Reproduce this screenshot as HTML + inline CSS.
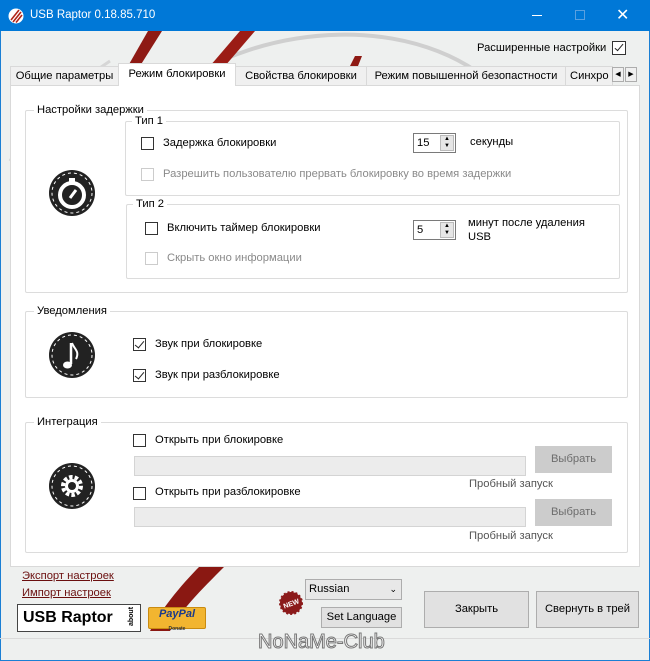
<!DOCTYPE html>
<html><head><meta charset="utf-8"><style>
*{box-sizing:border-box;margin:0;padding:0}
body{width:650px;height:661px;overflow:hidden;font-family:"Liberation Sans","DejaVu Sans",sans-serif;font-size:11.2px;color:#000;position:relative;background:#eef0ef}
.a{position:absolute;white-space:nowrap}
.win{position:absolute;left:0;top:0;width:650px;height:661px;border:1px solid #1a7fd4;border-top:none}
.title{position:absolute;left:0;top:0;width:650px;height:31px;background:#0078d7;color:#fff;font-size:12px}
.cb{position:absolute;width:13px;height:13px;border:1px solid #333;background:#fff}
.cb.d{border-color:#ccc}
.cb.c::after{content:"";position:absolute;left:3px;top:0px;width:4px;height:8px;border:solid #222;border-width:0 1.5px 1.5px 0;transform:rotate(40deg)}
.grp{position:absolute;border:1px solid #dcdcdc;border-radius:2px}
.lg{position:absolute;background:#fff;padding:0 3px;top:-8px;left:8px;line-height:14px}
.dis{color:#8a8a8a}
.tab{position:absolute;top:66px;height:20px;border:1px solid #d9d9d9;background:#f0f0f0;line-height:18px;text-align:center}
.btn{position:absolute;background:#e1e1e1;border:1px solid #adadad;text-align:center}
.spin{position:absolute;width:43px;height:20px;border:1px solid #7a7a7a;background:#fff;padding-left:3px;line-height:18px}
.spin i{position:absolute;right:1px;top:1px;width:14px;height:16px;background:#e6e6e6;border:1px solid #bbb;font-style:normal;font-size:6px;line-height:7px;text-align:center}
.tb{position:absolute;left:134px;width:392px;height:20px;background:#ececec;border:1px solid #d4d4d4}
.ic{position:absolute}
</style></head><body>
<svg class="a" style="left:0;top:31px" width="650" height="630">
<path d="M170 60 C260 -10 420 -20 500 60" stroke="#cfcfcf" stroke-width="4" fill="none"/>
<path d="M10 130 C40 80 80 50 110 30" stroke="#d6d6d6" stroke-width="3" fill="none"/>
<path d="M148 0 L162 0 L140 35 L128 35 Z" fill="#8e1a14"/>
<path d="M240 0 L255 0 L225 35 L210 35 Z" fill="#9b1c15"/>
<path d="M355 25 L362 25 L358 35 L350 35 Z" fill="#8e1a14"/>
<path d="M200 535 L225 535 C200 560 180 580 170 600 L150 600 C160 580 180 555 200 535 Z" fill="#8a1812"/>
</svg>
<div class="win"></div>
<div class="title">
<svg class="a" style="left:8px;top:8px" width="16" height="16"><circle cx="8" cy="8" r="7.5" fill="#fff"/><path d="M3 12 L11 2 M5 14 L13 4 M8 14.5 L14 7" stroke="#b02418" stroke-width="1.6"/></svg>
<div class="a" style="left:30px;top:9px;font-size:11.5px">USB Raptor 0.18.85.710</div>
<div class="a" style="left:532px;top:15px;width:10px;height:1px;background:#fff"></div>
<div class="a" style="left:575px;top:10px;width:10px;height:10px;border:1px solid #5aa0e0"></div>
<div class="a" style="left:616px;top:5px;font-size:16px">✕</div>
</div>
<div class="a" style="left:477px;top:42px">Расширенные настройки</div>
<div class="cb" style="left:612px;top:41px;width:14px;height:14px"><div class="a" style="left:4px;top:0;width:4px;height:9px;border:solid #222;border-width:0 1.5px 1.5px 0;transform:rotate(40deg)"></div></div>
<div class="a" style="left:10px;top:85px;width:630px;height:482px;background:#fff;border:1px solid #d9d9d9"></div>
<div class="tab" style="left:10px;width:109px">Общие параметры</div>
<div class="tab" style="left:235px;width:132px">Свойства блокировки</div>
<div class="tab" style="left:366px;width:200px">Режим повышенной безопастности</div>
<div class="tab" style="left:565px;width:48px;text-align:left;padding-left:4px;overflow:hidden">Синхро</div>
<div class="tab" style="left:118px;top:63px;width:118px;height:23px;background:#fff;border-bottom:none;line-height:21px">Режим блокировки</div>
<div class="a" style="left:612px;top:67px;width:12px;height:15px;border:1px solid #adadad;background:#f0f0f0;font-size:7px;text-align:center;line-height:13px">◀</div>
<div class="a" style="left:625px;top:67px;width:12px;height:15px;border:1px solid #adadad;background:#f0f0f0;font-size:7px;text-align:center;line-height:13px">▶</div>

<div class="grp" style="left:25px;top:110px;width:603px;height:183px"><div class="lg">Настройки задержки</div></div>
<div class="grp" style="left:125px;top:121px;width:495px;height:75px"><div class="lg" style="left:6px">Тип 1</div></div>
<div class="grp" style="left:126px;top:204px;width:494px;height:75px"><div class="lg" style="left:6px">Тип 2</div></div>
<svg class="ic" style="left:48px;top:169px" width="48" height="48"><circle cx="24" cy="24" r="23" fill="#222"/><circle cx="24" cy="24" r="20" fill="none" stroke="#fff" stroke-width="1" stroke-dasharray="3 3"/><circle cx="24" cy="26" r="12" fill="none" stroke="#fff" stroke-width="4"/><rect x="21" y="9" width="6" height="4" fill="#fff"/><path d="M22 29 L28 21" stroke="#fff" stroke-width="3"/></svg>
<div class="cb" style="left:141px;top:137px"></div><div class="a" style="left:163px;top:137px">Задержка блокировки</div>
<div class="spin" style="left:413px;top:133px">15<i>▲<br>▼</i></div><div class="a" style="left:470px;top:136px">секунды</div>
<div class="cb d" style="left:141px;top:168px"></div><div class="a dis" style="left:163px;top:168px">Разрешить пользователю прервать блокировку во время задержки</div>
<div class="cb" style="left:145px;top:222px"></div><div class="a" style="left:167px;top:222px">Включить таймер блокировки</div>
<div class="spin" style="left:413px;top:220px">5<i>▲<br>▼</i></div><div class="a" style="left:468px;top:216px;line-height:14px">минут после удаления<br>USB</div>
<div class="cb d" style="left:145px;top:252px"></div><div class="a dis" style="left:167px;top:252px">Скрыть окно информации</div>

<div class="grp" style="left:25px;top:311px;width:603px;height:87px"><div class="lg">Уведомления</div></div>
<svg class="ic" style="left:48px;top:331px" width="48" height="48"><circle cx="24" cy="24" r="23" fill="#222"/><circle cx="24" cy="24" r="20" fill="none" stroke="#fff" stroke-width="1" stroke-dasharray="3 3"/><path d="M23 12 L23 33" stroke="#fff" stroke-width="2.5"/><ellipse cx="19.5" cy="34" rx="4.5" ry="3.5" fill="#fff"/><path d="M24 12 C26 18 32 20 28 28" stroke="#fff" stroke-width="2" fill="none"/></svg>
<div class="cb c" style="left:133px;top:338px"></div><div class="a" style="left:155px;top:338px">Звук при блокировке</div>
<div class="cb c" style="left:133px;top:369px"></div><div class="a" style="left:155px;top:369px">Звук при разблокировке</div>

<div class="grp" style="left:25px;top:422px;width:603px;height:131px"><div class="lg">Интеграция</div></div>
<svg class="ic" style="left:48px;top:462px" width="48" height="48"><circle cx="24" cy="24" r="23" fill="#222"/><circle cx="24" cy="24" r="20" fill="none" stroke="#fff" stroke-width="1" stroke-dasharray="3 3"/><circle cx="24" cy="24" r="9" fill="none" stroke="#fff" stroke-width="4" stroke-dasharray="3.5 2.1"/><circle cx="24" cy="24" r="7" fill="#fff"/><circle cx="24" cy="24" r="4" fill="#222"/></svg>
<div class="cb" style="left:133px;top:434px"></div><div class="a" style="left:155px;top:434px">Открыть при блокировке</div>
<div class="tb" style="top:456px"></div>
<div class="btn" style="left:535px;top:446px;width:77px;height:27px;line-height:25px;background:#cccccc;border-color:#cccccc;color:#6d6d6d">Выбрать</div>
<div class="a" style="left:469px;top:478px;color:#555">Пробный запуск</div>
<div class="cb" style="left:133px;top:487px"></div><div class="a" style="left:155px;top:486px">Открыть при разблокировке</div>
<div class="tb" style="top:507px"></div>
<div class="btn" style="left:535px;top:499px;width:77px;height:27px;line-height:25px;background:#cccccc;border-color:#cccccc;color:#6d6d6d">Выбрать</div>
<div class="a" style="left:469px;top:530px;color:#555">Пробный запуск</div>

<div class="a" style="left:22px;top:570px;color:#6b0f0f;text-decoration:underline">Экспорт настроек</div>
<div class="a" style="left:22px;top:587px;color:#6b0f0f;text-decoration:underline">Импорт настроек</div>
<div class="a" style="left:17px;top:604px;width:124px;height:28px;border:1px solid #444;background:#fff"><span class="a" style="left:5px;top:4px;font-size:16px;font-weight:bold">USB Raptor</span><span class="a" style="left:104px;top:8px;font-size:7px;font-weight:bold;transform:rotate(-90deg)">about</span></div>
<div class="a" style="left:148px;top:607px;width:58px;height:22px;background:#f2b530;border:1px solid #c98b10;border-radius:2px;text-align:center;font-size:11px;font-style:italic;font-weight:bold;color:#1b3a8a;line-height:13px">PayPal<br><span style="font-size:5px;color:#333;font-style:normal">Donate</span></div>
<svg class="a" style="left:279px;top:591px" width="24" height="24"><circle cx="12" cy="12" r="11" fill="#8b1a1a" stroke="#8b1a1a" stroke-width="2" stroke-dasharray="2 2"/><text x="12" y="15" font-size="7" fill="#fff" text-anchor="middle" font-weight="bold" transform="rotate(-20 12 12)" font-family="Liberation Sans">NEW</text></svg>
<div class="a" style="left:305px;top:579px;width:97px;height:21px;border:1px solid #adadad;background:#e8e8e8;padding-left:3px;line-height:19px">Russian<span class="a" style="right:4px;top:0;font-size:9px">⌄</span></div>
<div class="btn" style="left:321px;top:607px;width:81px;height:21px;line-height:19px">Set Language</div>
<div class="btn" style="left:424px;top:591px;width:105px;height:37px;line-height:35px">Закрыть</div>
<div class="btn" style="left:536px;top:591px;width:103px;height:37px;line-height:35px">Свернуть в трей</div>
<div class="a" style="left:0;top:638px;width:650px;height:1px;background:#dadada"></div>
<div class="a" style="left:258px;top:631px;font-size:20px;color:#fff;-webkit-text-stroke:1px #777">NoNaMe-Club</div>
<div class="a" style="left:0;top:660px;width:650px;height:1px;background:#1a7fd4"></div>
</body></html>
